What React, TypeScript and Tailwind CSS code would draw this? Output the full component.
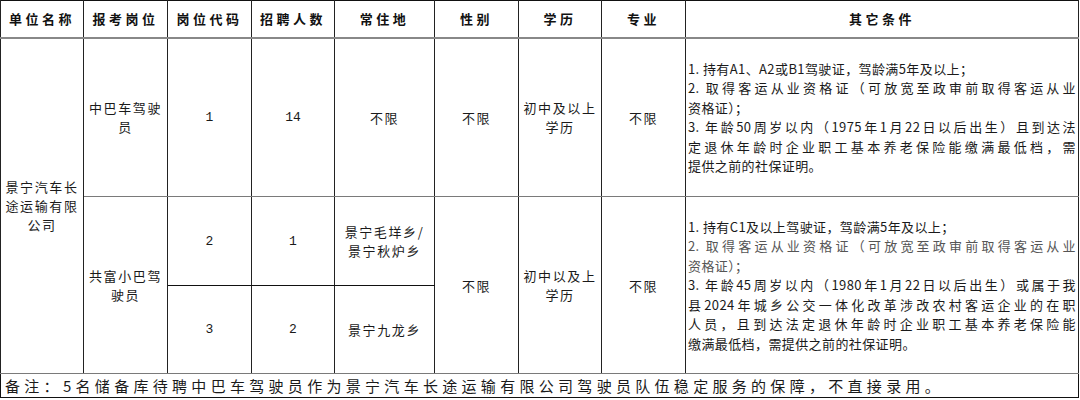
import React from 'react';

type Line = { t: string; j?: boolean; muted?: boolean };

const cond1: Line[] = [
  { t: '1. 持有A1、A2或B1驾驶证，驾龄满5年及以上；' },
  { t: '2. 取得客运从业资格证（可放宽至政审前取得客运从业', j: true },
  { t: '资格证）；' },
  { t: '3. 年龄50周岁以内（1975年1月22日以后出生）且到达法', j: true },
  { t: '定退休年龄时企业职工基本养老保险能缴满最低档，需', j: true },
  { t: '提供之前的社保证明。' },
];

const cond2: Line[] = [
  { t: '1. 持有C1及以上驾驶证，驾龄满5年及以上；' },
  { t: '2. 取得客运从业资格证（可放宽至政审前取得客运从业', j: true, muted: true },
  { t: '资格证）；', muted: true },
  { t: '3. 年龄45周岁以内（1980年1月22日以后出生）或属于我', j: true },
  { t: '县2024年城乡公交一体化改革涉改农村客运企业的在职', j: true },
  { t: '人员，且到达法定退休年龄时企业职工基本养老保险能', j: true },
  { t: '缴满最低档，需提供之前的社保证明。' },
];

const headers = ['单位名称', '报考岗位', '岗位代码', '招聘人数', '常住地', '性别', '学历', '专业', '其它条件'];

// cell borders: verticals dark, horizontals a bit greyer
const cell = 'border-x border-x-[#222] border-y border-y-[#7a7a7a] px-[3px] text-center align-middle';
const num = "font-['Liberation_Mono',monospace] text-[13px] tracking-normal";

const Conditions = ({ lines }: { lines: Line[] }) => (
  <div className="flex flex-col text-left text-[13px] leading-[19.5px] tracking-[0.4px]">
    {lines.map((l, i) => (
      <div
        key={i}
        className={`${l.j ? 'text-justify [text-align-last:justify]' : ''} ${l.muted ? 'text-[#555]' : 'text-[#1a1a1a]'}`}
      >
        {l.t}
      </div>
    ))}
  </div>
);

export default function App() {
  return (
    <div className="w-[1080px] h-[400px] bg-white font-['Noto_Sans_CJK_SC','Noto_Sans',sans-serif] text-[#1a1a1a]">
      <table className="table-fixed border-collapse w-[1078px] border border-[#111] text-[13px] leading-[19px] tracking-[1.6px]">
        <colgroup>
          <col className="w-[83px]" />
          <col className="w-[84px]" />
          <col className="w-[84px]" />
          <col className="w-[83px]" />
          <col className="w-[100px]" />
          <col className="w-[84px]" />
          <col className="w-[83px]" />
          <col className="w-[84px]" />
          <col className="w-[393px]" />
        </colgroup>
        <tbody>
          <tr className="h-[37px]">
            {headers.map((h) => (
              <th
                key={h}
                className="border-x border-x-[#222] border-b-2 border-b-[#888] px-0 text-center align-middle font-bold text-[13px] tracking-[3.5px] text-[#111]"
              >
                {h}
              </th>
            ))}
          </tr>

          <tr className="h-[159px]">
            <td rowSpan={3} className={`${cell} px-[4px]`}>
              景宁汽车长途运输有限公司
            </td>
            <td className={cell}>中巴车驾驶员</td>
            <td className={`${cell} ${num}`}>1</td>
            <td className={`${cell} ${num}`}>14</td>
            <td className={cell}>不限</td>
            <td className={cell}>不限</td>
            <td className={cell}>初中及以上学历</td>
            <td className={cell}>不限</td>
            <td className={`${cell} pl-[2px] pr-[2px]`}>
              <Conditions lines={cond1} />
            </td>
          </tr>

          <tr className="h-[89px]">
            <td rowSpan={2} className={cell}>共富小巴驾驶员</td>
            <td className={`${cell} ${num} border-b-[#111]`}>2</td>
            <td className={`${cell} ${num} border-b-[#111]`}>1</td>
            <td className={`${cell} border-b-[#111]`}>景宁毛垟乡/景宁秋炉乡</td>
            <td rowSpan={2} className={cell}>不限</td>
            <td rowSpan={2} className={cell}>初中以及上学历</td>
            <td rowSpan={2} className={cell}>不限</td>
            <td rowSpan={2} className={`${cell} pl-[2px] pr-[2px]`}>
              <Conditions lines={cond2} />
            </td>
          </tr>

          <tr className="h-[88px]">
            <td className={`${cell} ${num}`}>3</td>
            <td className={`${cell} ${num}`}>2</td>
            <td className={cell}>景宁九龙乡</td>
          </tr>

          <tr className="h-[24px]">
            <td
              colSpan={9}
              className="border border-[#111] border-t-[#888] px-[4px] text-left align-middle text-[15px] leading-[22px] tracking-[4.3px] text-[#1a1a1a]"
            >
              备注：5名储备库待聘中巴车驾驶员作为景宁汽车长途运输有限公司驾驶员队伍稳定服务的保障，不直接录用。
            </td>
          </tr>
        </tbody>
      </table>
    </div>
  );
}
